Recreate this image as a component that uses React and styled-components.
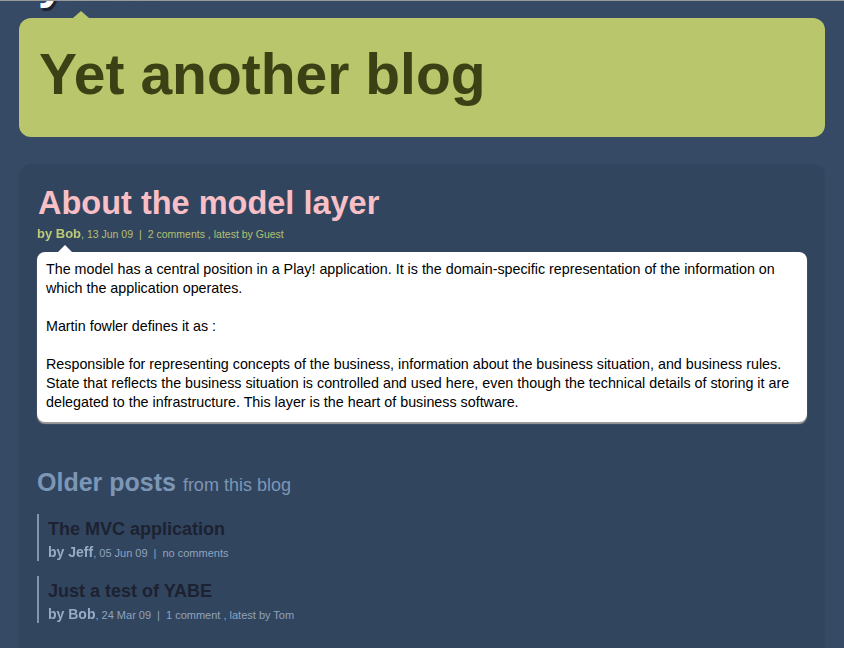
import React from 'react';
import styled, { createGlobalStyle } from 'styled-components';

const posts = [
  { id: 1, title: 'The MVC application', author: 'Jeff', date: '05 Jun 09', comments: 'no comments' },
  { id: 2, title: 'Just a test of YABE', author: 'Bob', date: '24 Mar 09', comments: '1 comment , latest by Tom' },
];

const paragraphs = [
  'The model has a central position in a Play! application. It is the domain-specific representation of the information on which the application operates.',
  'Martin fowler defines it as :',
  'Responsible for representing concepts of the business, information about the business situation, and business rules. State that reflects the business situation is controlled and used here, even though the technical details of storing it are delegated to the infrastructure. This layer is the heart of business software.',
];

function App() {
  const renderOlder = () => {
    return posts.map((post) => (
      <OlderItem key={post.id}>
        <OlderTitle>{post.title}</OlderTitle>
        <Meta tone='blue'>
          <Author size={14}>by {post.author}</Author>, {post.date}
          <Sep>|</Sep>
          {post.comments}
        </Meta>
      </OlderItem>
    ));
  }

  return (
    <>
      <GlobalStyle />
      <Page>
        <Header>
          <Logo>yabe.</Logo>
          <TabArrow />
        </Header>
        <Banner>
          <BlogTitle>Yet another blog</BlogTitle>
        </Banner>
        <Panel>
          <PostTitle>About the model layer</PostTitle>
          <Meta tone='green'>
            <Author size={13}>by Bob</Author>, 13 Jun 09
            <Sep>|</Sep>
            2 comments , latest by Guest
          </Meta>
          <PostBody>
            {paragraphs.map((p, i) => <p key={i}>{p}</p>)}
          </PostBody>
          <OlderHeading>
            Older posts <span>from this blog</span>
          </OlderHeading>
          {renderOlder()}
        </Panel>
      </Page>
    </>
  );
}

const GlobalStyle = createGlobalStyle`
  html, body {
    margin: 0;
    padding: 0;
    background: #364a66;
  }
  body {
    font-family: "Liberation Sans", Arial, sans-serif;
    border-top: 1px solid #9a9a9a;
  }
`

const Page = styled.div`
  display: flex;
  flex-direction: column;
  min-height: 647px;
`

const Header = styled.div`
  position: relative;
  height: 17px;
  overflow: hidden;
  padding-left: 38px;
`

const Logo = styled.div`
  margin-top: -46px;
  font-size: 48px;
  line-height: 54px;
  font-weight: bold;
  color: #fff;
  text-shadow: 2px 3px 1px #1a2233;
  letter-spacing: -1px;
`

const TabArrow = styled.span`
  position: absolute;
  left: 73px;
  bottom: 0;
  width: 0;
  height: 0;
  border-left: 8px solid transparent;
  border-right: 8px solid transparent;
  border-bottom: 7px solid #b9c66c;
`

const Banner = styled.div`
  margin: 0 19px;
  height: 119px;
  box-sizing: border-box;
  padding: 23px 20px 0;
  background: #b9c66c;
  border-radius: 12px;
`

const BlogTitle = styled.h1`
  margin: 0;
  font-size: 57px;
  line-height: 66px;
  color: #3b4114;
`

const Panel = styled.div`
  flex: 1;
  margin: 27px 19px 0;
  padding: 21px 18px 20px;
  background: #32455f;
  border-radius: 12px 12px 0 0;
`

const PostTitle = styled.h2`
  margin: 0 0 0 1px;
  font-size: 32.5px;
  line-height: 37px;
  color: #f8c0c6;
`

const Meta = styled.div`
  margin-top: 3px;
  font-size: ${(p) => (p.tone === 'green' ? '10.5px' : '11px')};
  line-height: 18px;
  color: ${(p) => (p.tone === 'green' ? '#b2c070' : '#8fa3bd')};
`

const Author = styled.b`
  font-size: ${(p) => p.size}px;
  color: inherit;
  filter: brightness(1.05);
`

const Sep = styled.span`
  margin: 0 6px;
`

const PostBody = styled.div`
  position: relative;
  margin-top: 9px;
  padding: 8px 9px 10px;
  background: #fff;
  border-radius: 8px;
  box-shadow: 0 2px 1px #9c9c9c;
  font-size: 14.3px;
  line-height: 19px;
  color: #000;

  &::before {
    content: '';
    position: absolute;
    top: -7px;
    left: 21px;
    border-left: 7px solid transparent;
    border-right: 7px solid transparent;
    border-bottom: 7px solid #fff;
  }

  p {
    margin: 0 0 19px;
  }
  p:last-child {
    margin-bottom: 0;
  }
`

const OlderHeading = styled.h3`
  margin: 45px 0 14px;
  font-size: 25px;
  line-height: 30px;
  color: #7c96b6;

  span {
    font-size: 18px;
    font-weight: normal;
  }
`

const OlderItem = styled.div`
  margin-bottom: 15px;
  padding: 4px 0 0 9px;
  border-left: 2px solid #8495ab;
  height: 43px;
`

const OlderTitle = styled.div`
  font-size: 18px;
  line-height: 22px;
  font-weight: bold;
  color: #1c2231;
`

export default App;
